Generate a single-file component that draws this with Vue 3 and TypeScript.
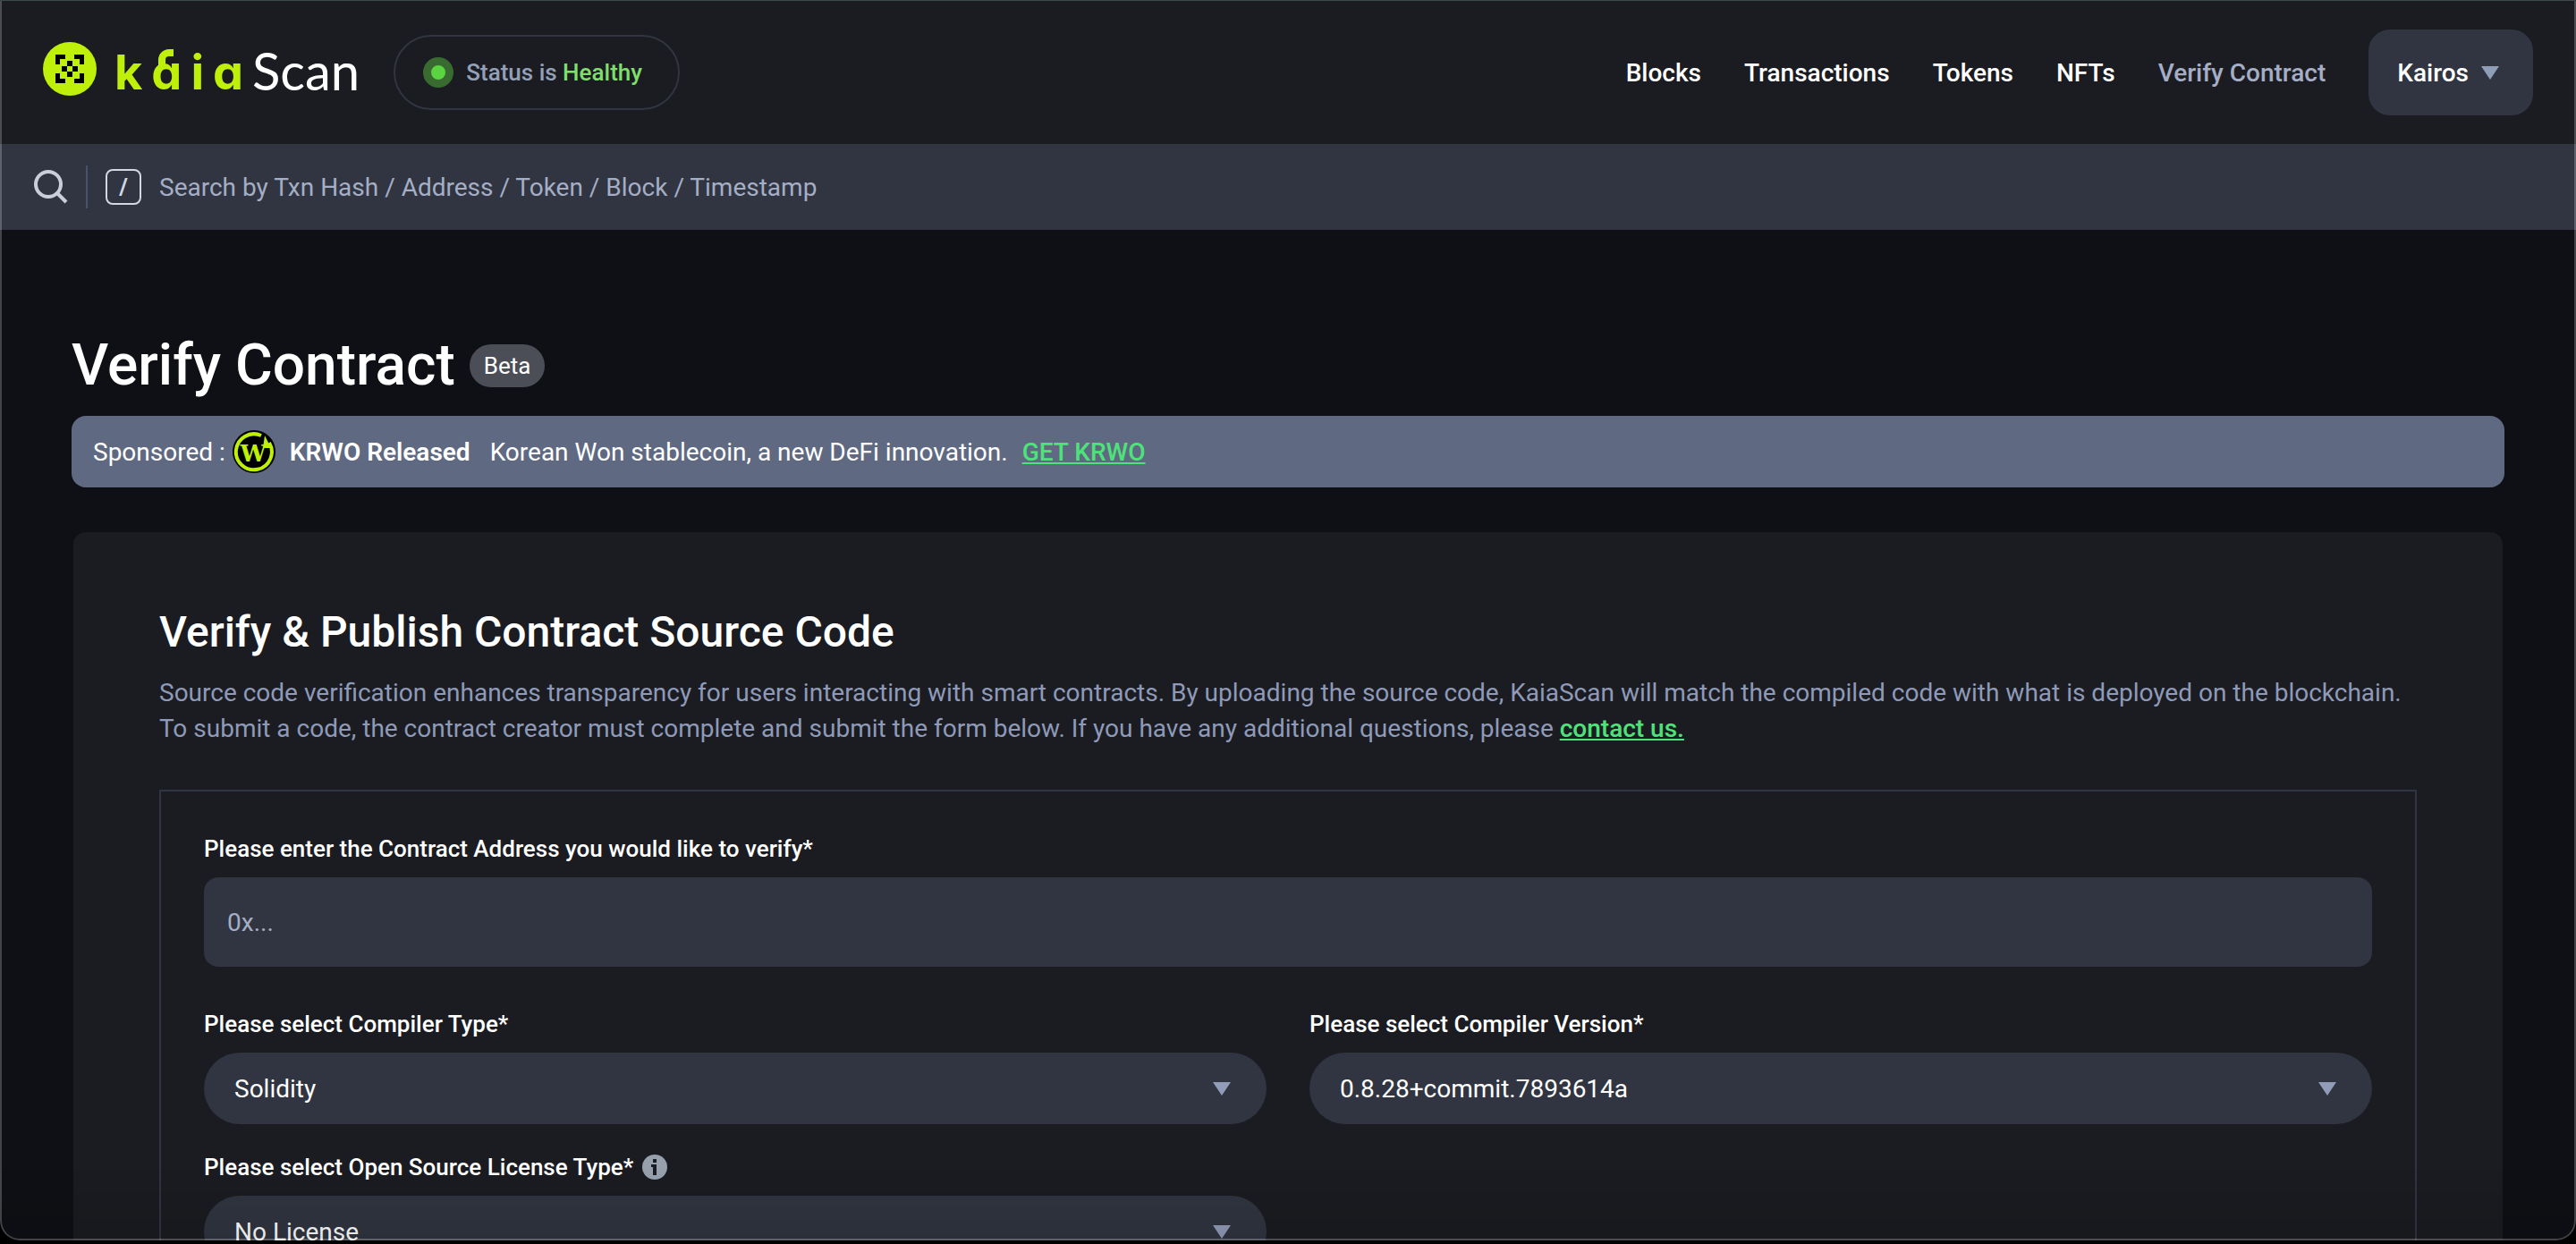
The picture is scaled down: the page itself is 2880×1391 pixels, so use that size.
<script setup lang="ts">
import { ref } from 'vue'

interface NavItem {
  label: string
  current?: boolean
}

interface SelectField {
  id: string
  label: string
  options: string[]
  info?: boolean
}

const navItems: NavItem[] = [
  { label: 'Blocks' },
  { label: 'Transactions' },
  { label: 'Tokens' },
  { label: 'NFTs' },
  { label: 'Verify Contract', current: true },
]

const selectFields: SelectField[] = [
  { id: 'compiler-type', label: 'Please select Compiler Type*', options: ['Solidity'] },
  { id: 'compiler-version', label: 'Please select Compiler Version*', options: ['0.8.28+commit.7893614a'] },
  { id: 'license-type', label: 'Please select Open Source License Type*', options: ['No License'], info: true },
]

const query = ref('')
const address = ref('')
</script>

<template>
  <div class="window">
    <header class="header">
      <a class="logo" href="#" aria-label="Kaia Scan">
        <svg class="logo-mark" viewBox="0 0 60 60" aria-hidden="true">
          <circle cx="30" cy="30" r="30" fill="#bff009" />
          <path
            fill="#000"
            d="M14 14h11v5h-6v6h-5zM35 14h11v11h-5v-6h-6zM14 35h5v6h6v5h-11zM41 35h5v11h-11v-5h6z"
          />
          <path fill="#000" d="M27 21h6v6h-6zM21 27h6v6h-6zM33 27h6v6h-6zM27 33h6v6h-6z" />
        </svg>
        <span class="wordmark">
          <span>k</span>
          <span class="hooked">ɑ<svg class="hook" viewBox="0 0 18 18" aria-hidden="true"><path d="M17 4h-5a8 8 0 0 0-8 8v6" fill="none" stroke="#bff009" stroke-width="8" /></svg></span>
          <span>i</span>
          <span>ɑ</span>
        </span>
        <span class="scan">Scan</span>
      </a>
      <div class="status">
        <span class="status-dot"></span>
        <span>Status is <b>Healthy</b></span>
      </div>
      <nav class="nav">
        <a v-for="item in navItems" :key="item.label" href="#" :class="{ current: item.current }">{{ item.label }}</a>
      </nav>
      <button class="network" type="button">
        Kairos
        <svg class="caret" viewBox="0 0 20 15" aria-hidden="true"><path d="M0 0h20L10 15z" /></svg>
      </button>
    </header>

    <form class="search" role="search" @submit.prevent>
      <svg class="search-icon" viewBox="0 0 38 38" aria-hidden="true">
        <circle cx="16" cy="16" r="14" />
        <path d="M26 26l10 10" />
      </svg>
      <span class="divider"></span>
      <kbd class="key">/</kbd>
      <input
        v-model="query"
        type="text"
        aria-label="Search"
        placeholder="Search by Txn Hash / Address / Token / Block / Timestamp"
      />
    </form>

    <main class="main">
      <div class="title-row">
        <h1>Verify Contract</h1>
        <span class="beta">Beta</span>
      </div>

      <div class="sponsor">
        <span>Sponsored :</span>
        <svg class="coin" viewBox="0 0 48 48" aria-hidden="true">
          <circle cx="24" cy="24" r="24" fill="#000" />
          <path d="M32 6a20 20 0 1 0 9 8" fill="none" stroke="#bff009" stroke-width="4" />
          <path d="M36 6l7 14h-9z" fill="#bff009" />
          <text x="23" y="35" text-anchor="middle" class="coin-letter">W</text>
        </svg>
        <strong>KRWO Released</strong>
        <span class="sponsor-text">Korean Won stablecoin, a new DeFi innovation.</span>
        <a href="#">GET KRWO</a>
      </div>

      <section class="card">
        <h2>Verify &amp; Publish Contract Source Code</h2>
        <p>
          Source code verification enhances transparency for users interacting with smart contracts. By uploading the
          source code, KaiaScan will match the compiled code with what is deployed on the blockchain.<br />
          To submit a code, the contract creator must complete and submit the form below. If you have any additional
          questions, please <a href="#">contact us.</a>
        </p>

        <form class="form" @submit.prevent>
          <div class="field wide">
            <label for="address">Please enter the Contract Address you would like to verify*</label>
            <input id="address" v-model="address" type="text" placeholder="0x..." />
          </div>
          <div v-for="field in selectFields" :key="field.id" class="field">
            <div class="label-row">
              <label :for="field.id">{{ field.label }}</label>
              <svg v-if="field.info" class="info" viewBox="0 0 28 28" aria-hidden="true">
                <circle cx="14" cy="14" r="14" fill="#97a1ae" />
                <path fill="#1b1c21" d="M12 5h4v4h-4zM10 11h6v12h-4v-9h-2z" />
              </svg>
            </div>
            <div class="select">
              <select :id="field.id">
                <option v-for="option in field.options" :key="option">{{ option }}</option>
              </select>
              <svg class="caret" viewBox="0 0 20 15" aria-hidden="true"><path d="M0 0h20L10 15z" /></svg>
            </div>
          </div>
        </form>
      </section>
    </main>
    <div class="frame"></div>
  </div>
</template>

<style>
body {
  background: #000;
  overflow: hidden;
}
</style>

<style scoped>
* {
  box-sizing: border-box;
}

.window {
  position: relative;
  height: calc(100vh - 4px);
  overflow: hidden;
  padding-top: 1px;
  border-radius: 0 0 22px 22px;
  background: #0f1015;
  color: #fff;
  font-family: Roboto, sans-serif;
  font-size: 28px;
}

.frame {
  position: absolute;
  inset: 0;
  border: 2px solid rgba(255, 255, 255, 0.22);
  border-top: 1px solid #404a4c;
  border-radius: 0 0 22px 22px;
  background: linear-gradient(to top, rgba(0, 0, 0, 0.1), transparent 80px);
  pointer-events: none;
}

a {
  color: inherit;
  text-decoration: none;
}

input,
select,
button {
  border: 0;
  color: #fff;
  font: inherit;
}

input::placeholder {
  color: #a5aec5;
  opacity: 1;
}

.header {
  display: flex;
  align-items: center;
  height: 160px;
  padding: 0 48px;
  background: #1b1c21;
}

.logo {
  display: flex;
  align-items: center;
  margin-right: 38px;
}

.logo-mark {
  width: 60px;
  height: 60px;
  margin: 0 20px 8px 0;
}

.wordmark {
  display: flex;
  gap: 10px;
  color: #bff009;
  font: 700 54px/64px Inter, 'DejaVu Sans', sans-serif;
}

.hooked {
  position: relative;
}

.hook {
  position: absolute;
  top: 6px;
  left: 8px;
  width: 18px;
  height: 18px;
}

.scan {
  margin-left: 10px;
  padding-bottom: 4px;
  font: 400 58px/64px Lato, sans-serif;
}

.status {
  display: flex;
  align-items: center;
  gap: 14px;
  height: 84px;
  padding: 0 40px 0 31px;
  border: 2px solid #303541;
  border-radius: 42px;
  color: #94a0b8;
  font-size: 26px;
  font-weight: 500;
}

.status b {
  color: #80de6c;
  font-weight: 500;
}

.status-dot {
  width: 34px;
  height: 34px;
  border: 9px solid #396a2f;
  border-radius: 50%;
  background: #5ad441;
}

.nav {
  display: flex;
  gap: 48px;
  margin-left: auto;
  font-weight: 500;
}

.nav .current {
  color: #a5aec5;
}

.network {
  display: flex;
  align-items: center;
  gap: 14px;
  height: 96px;
  margin-left: 48px;
  padding: 0 38px 0 32px;
  border-radius: 24px;
  background: #303541;
  font-weight: 500;
}

.caret {
  width: 20px;
  height: 15px;
  fill: #919db7;
}

.search {
  display: flex;
  align-items: center;
  height: 96px;
  padding: 0 38px;
  background: #303541;
}

.search-icon {
  width: 38px;
  height: 38px;
  fill: none;
  stroke: #c9cedb;
  stroke-width: 4;
}

.divider {
  width: 2px;
  height: 48px;
  margin: 0 20px;
  background: #495268;
}

.key {
  width: 40px;
  height: 40px;
  border: 2px solid #d3d8e2;
  border-radius: 8px;
  color: #d3d8e2;
  font: 700 26px/36px Roboto, sans-serif;
  text-align: center;
}

.search input {
  flex: 1;
  margin-left: 20px;
  padding: 0;
  outline: 0;
  background: none;
}

.main {
  padding: 112px 80px 0;
}

.title-row {
  display: flex;
  align-items: center;
  gap: 16px;
}

h1 {
  margin: 0;
  font-size: 64px;
  font-weight: 500;
  line-height: 80px;
}

.beta {
  padding: 0 16px;
  border-radius: 24px;
  background: #4c4e57;
  font-size: 26px;
  line-height: 48px;
}

.sponsor {
  display: flex;
  align-items: center;
  height: 80px;
  margin-top: 16px;
  padding: 0 24px;
  border-radius: 16px;
  background: #5f6a82;
}

.coin {
  width: 48px;
  height: 48px;
  margin: 0 16px 0 8px;
}

.coin-letter {
  fill: #bff009;
  font: 700 26px 'DejaVu Serif', serif;
}

.sponsor strong {
  font-weight: 600;
}

.sponsor-text {
  margin: 0 16px 0 22px;
}

.sponsor a,
.card p a {
  color: #4de37a;
  font-weight: 500;
  text-decoration: underline;
}

.card {
  margin-top: 48px;
  padding: 80px 96px;
  border: 2px solid #0f1015;
  border-radius: 16px;
  background: #1b1c21;
}

h2 {
  margin: 0;
  font-size: 48px;
  font-weight: 500;
  line-height: 64px;
}

.card p {
  margin: 16px 0 48px;
  color: #8e9ab8;
  line-height: 40px;
}

.form {
  display: grid;
  grid-template-columns: 1fr 1fr;
  gap: 32px 48px;
  padding: 48px;
  border: 2px solid #303541;
}

.field {
  display: flex;
  flex-direction: column;
  gap: 16px;
}

.wide {
  grid-column: 1 / -1;
  margin-bottom: 16px;
}

.field label {
  font-size: 26px;
  font-weight: 500;
  line-height: 32px;
}

.label-row {
  display: flex;
  align-items: center;
  gap: 10px;
}

.info {
  width: 28px;
  height: 28px;
}

.field input {
  height: 100px;
  padding: 0 26px;
  border-radius: 16px;
  background: #303541;
}

.select {
  display: grid;
  align-items: center;
}

.select select {
  grid-area: 1 / 1;
  height: 80px;
  padding: 0 34px;
  border-radius: 40px;
  appearance: none;
  background: #303541;
}

.select .caret {
  grid-area: 1 / 1;
  justify-self: end;
  margin-right: 40px;
  pointer-events: none;
}
</style>
